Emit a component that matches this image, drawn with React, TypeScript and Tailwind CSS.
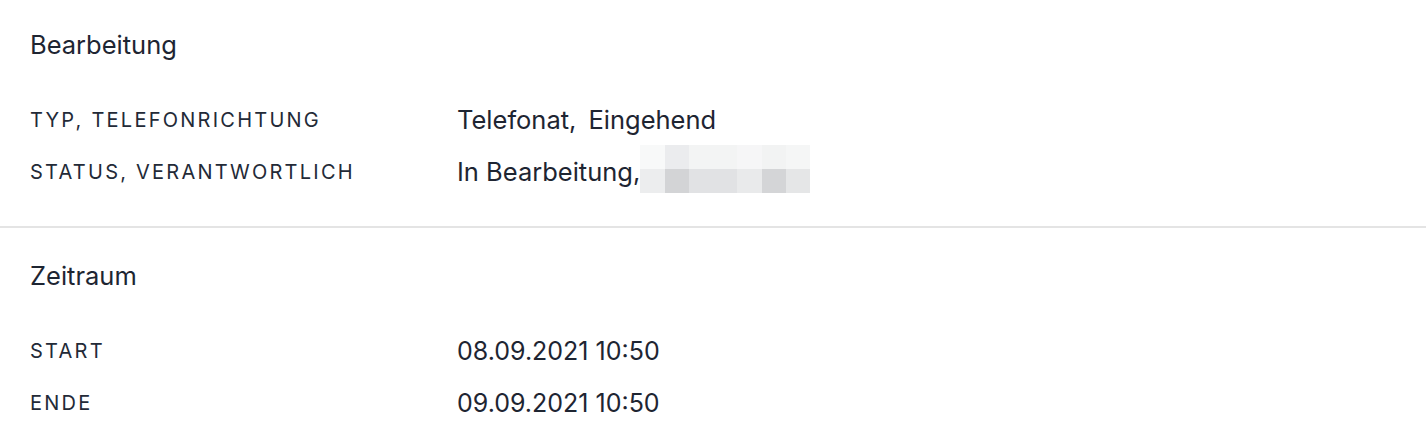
import React from "react";

const topRow = ["#f8f9f9", "#ebecee", "#f3f4f4", "#f3f4f4", "#f6f6f7", "#f2f3f3", "#f5f6f6"];
const bottomRow = ["#ecedee", "#d3d4d6", "#e1e2e4", "#e1e2e4", "#e9eaeb", "#d4d5d7", "#e5e6e7"];

function Blur() {
  return (
    <div className="grid grid-cols-7 grid-rows-2 w-[170px] h-[48px] mb-[7px]">
      {topRow.map((c, i) => (
        <div key={"t" + i} style={{ backgroundColor: c }} />
      ))}
      {bottomRow.map((c, i) => (
        <div key={"b" + i} style={{ backgroundColor: c }} />
      ))}
    </div>
  );
}

function Row({ label, children }: { label: string; children: React.ReactNode }) {
  return (
    <div className="flex items-center h-[52px]">
      <div className="w-[427px] shrink-0 text-[20px] tracking-[0.112em] leading-[32px] text-[#232a37]">
        {label}
      </div>
      <div className="flex items-center text-[25px] leading-[32px] text-[#1e2532]">{children}</div>
    </div>
  );
}

export default function App() {
  return (
    <div
      className="w-[1426px] h-[428px] overflow-hidden bg-white"
      style={{ fontFamily: "Inter, 'Noto Sans', sans-serif" }}
    >
      <section className="px-[30px] pt-[29px] pb-[28px] border-b-2 border-[#e4e4e4]">
        <h2 className="text-[25.5px] leading-[32px] text-[#1e2532] font-normal">Bearbeitung</h2>
        <div className="mt-[33px]">
          <Row label="TYP, TELEFONRICHTUNG">
            <span className="text-[25.5px]">Telefonat,</span>
            <span className="ml-[12px] text-[25.5px]">Eingehend</span>
          </Row>
          <Row label="STATUS, VERANTWORTLICH">
            <span className="text-[25.5px]">In Bearbeitung,</span>
            <Blur />
          </Row>
        </div>
      </section>
      <section className="px-[30px] pt-[32px]">
        <h2 className="text-[25.5px] leading-[32px] text-[#1e2532] font-normal">Zeitraum</h2>
        <div className="mt-[33px]">
          <Row label="START">
            <span>08.09.2021 10:50</span>
          </Row>
          <Row label="ENDE">
            <span>09.09.2021 10:50</span>
          </Row>
        </div>
      </section>
    </div>
  );
}
